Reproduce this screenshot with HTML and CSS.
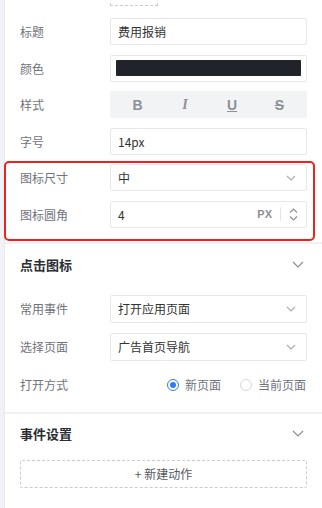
FILE: index.html
```html
<!DOCTYPE html>
<html lang="zh-CN">
<head>
    <meta charset="UTF-8">
    <meta name="viewport" content="width=device-width, initial-scale=1.0">
    <title>图标属性</title>
    <link rel="stylesheet" href="styles.css">
</head>
<body>
    <div class="side-strip"></div>
    <div class="panel">
        <div class="icon-slot"></div>

        <div class="form-row">
            <label class="row-label">标题</label>
            <div class="field"><span class="field-text">费用报销</span></div>
        </div>
        <div class="form-row">
            <label class="row-label">颜色</label>
            <div class="field color-field"><div class="color-swatch"></div></div>
        </div>
        <div class="form-row">
            <label class="row-label">样式</label>
            <div class="style-bar">
                <span class="style-btn bold">B</span>
                <span class="style-btn italic">I</span>
                <span class="style-btn underline">U</span>
                <span class="style-btn strike">S</span>
            </div>
        </div>
        <div class="form-row">
            <label class="row-label">字号</label>
            <div class="field"><span class="field-text">14px</span></div>
        </div>

        <div class="highlight-group">
            <div class="form-row">
                <label class="row-label">图标尺寸</label>
                <div class="field select">
                    <span class="field-text">中</span>
                    <svg class="chevron" width="10" height="6" viewBox="0 0 10 6"><path d="M1 1 L5 5 L9 1" fill="none" stroke="#a8abb2" stroke-width="1.1"/></svg>
                </div>
            </div>
            <div class="form-row">
                <label class="row-label">图标圆角</label>
                <div class="field number">
                    <span class="field-text">4</span>
                    <span class="unit">PX</span>
                    <span class="stepper">
                        <svg width="9" height="5" viewBox="0 0 9 5"><path d="M1 4.5 L4.5 1 L8 4.5" fill="none" stroke="#8a8d94" stroke-width="1.1"/></svg>
                        <svg width="9" height="5" viewBox="0 0 9 5"><path d="M1 0.5 L4.5 4 L8 0.5" fill="none" stroke="#8a8d94" stroke-width="1.1"/></svg>
                    </span>
                </div>
            </div>
        </div>

        <div class="divider first"></div>

        <div class="section-head">
            <span class="section-title">点击图标</span>
            <svg width="12" height="7" viewBox="0 0 12 7"><path d="M1 1 L6 6 L11 1" fill="none" stroke="#8a8d94" stroke-width="1.2"/></svg>
        </div>
        <div class="form-row tall">
            <label class="row-label">常用事件</label>
            <div class="field select">
                <span class="field-text">打开应用页面</span>
                <svg class="chevron" width="10" height="6" viewBox="0 0 10 6"><path d="M1 1 L5 5 L9 1" fill="none" stroke="#a8abb2" stroke-width="1.1"/></svg>
            </div>
        </div>
        <div class="form-row tall">
            <label class="row-label">选择页面</label>
            <div class="field select">
                <span class="field-text">广告首页导航</span>
                <svg class="chevron" width="10" height="6" viewBox="0 0 10 6"><path d="M1 1 L5 5 L9 1" fill="none" stroke="#a8abb2" stroke-width="1.1"/></svg>
            </div>
        </div>
        <div class="form-row tall">
            <label class="row-label">打开方式</label>
            <div class="radio-group">
                <span class="radio checked"><span class="radio-dot"></span>新页面</span>
                <span class="radio"><span class="radio-dot"></span>当前页面</span>
            </div>
        </div>

        <div class="divider second"></div>

        <div class="section-head small">
            <span class="section-title">事件设置</span>
            <svg width="12" height="7" viewBox="0 0 12 7"><path d="M1 1 L6 6 L11 1" fill="none" stroke="#8a8d94" stroke-width="1.2"/></svg>
        </div>
        <div class="add-action">+ 新建动作</div>
    </div>
</body>
</html>
```

FILE: styles.css
```css
body {
    margin: 0;
    display: flex;
    height: 100vh;
    overflow: hidden;
    background-color: #ffffff;
    font-family: "Noto Sans CJK SC", "Noto Sans", sans-serif;
    font-size: 12px;
    color: #333333;
}

.side-strip {
    width: 4px;
    flex-shrink: 0;
    background-color: #f0f2f5;
    border-right: 1px solid #e8eaee;
}

.panel {
    flex: 1;
    padding: 0 15px;
    box-sizing: border-box;
}

.icon-slot {
    margin: -14px 0 12px 90px;
    width: 48px;
    height: 20px;
    border: 1px dashed #c9ccd2;
    box-sizing: border-box;
}

.form-row {
    display: flex;
    align-items: center;
    height: 27px;
    margin-bottom: 9.5px;
}
.form-row.tall {
    height: 28px;
    margin-bottom: 10px;
}

.row-label {
    width: 90px;
    flex-shrink: 0;
    color: #70737a;
}

.field {
    flex: 1;
    height: 100%;
    display: flex;
    align-items: center;
    padding: 0 7px;
    border: 1px solid #e6e8ec;
    border-radius: 2px;
    box-sizing: border-box;
}
.field-text {
    flex: 1;
    color: #333333;
}

.color-field {
    padding: 0 5px;
}
.color-swatch {
    width: 100%;
    height: 16px;
    background-color: #20232a;
    border-radius: 1px;
}

.style-bar {
    flex: 1;
    height: 100%;
    display: flex;
    align-items: center;
    justify-content: space-around;
    background-color: #f2f3f5;
    border-radius: 2px;
    padding: 0 4px;
}
.style-btn {
    font-family: "Liberation Sans", Arial, sans-serif;
    font-size: 14px;
    color: #8d9098;
    width: 20px;
    text-align: center;
}
.style-btn.bold {
    font-weight: bold;
}
.style-btn.italic {
    font-family: "Liberation Serif", serif;
    font-style: italic;
    font-weight: bold;
}
.style-btn.underline {
    text-decoration: underline;
    font-weight: bold;
}
.style-btn.strike {
    text-decoration: line-through;
    font-weight: bold;
}

.chevron {
    margin-right: 3px;
}

.unit {
    font-family: "Liberation Sans", Arial, sans-serif;
    font-weight: bold;
    color: #8d9098;
    font-size: 11px;
    padding-right: 8px;
    border-right: 1px solid #e3e5e9;
    line-height: 14px;
}
.stepper {
    display: flex;
    flex-direction: column;
    gap: 3px;
    padding-left: 8px;
    margin-right: 1px;
}
.stepper svg {
    display: block;
}

.highlight-group {
    position: relative;
    margin-top: 1px;
}
.highlight-group::after {
    content: "";
    position: absolute;
    top: -3px;
    bottom: -13px;
    left: -16px;
    right: -8px;
    border: 2.5px solid #f0201c;
    border-radius: 5px;
    pointer-events: none;
}

.divider {
    height: 2px;
    background-color: #f0f1f4;
    margin: 0 -15px;
}
.divider.first {
    margin-top: 14px;
}
.divider.second {
    margin-top: 13px;
}

.section-head {
    display: flex;
    align-items: center;
    justify-content: space-between;
    height: 42px;
    margin-bottom: 9px;
    padding-right: 3px;
}
.section-head.small {
    height: 40px;
    margin-bottom: 6px;
}
.section-title {
    font-size: 13px;
    font-weight: bold;
    color: #2b2e33;
}

.radio-group {
    display: flex;
    align-items: center;
    gap: 19px;
    padding-left: 57px;
    white-space: nowrap;
}
.radio {
    display: flex;
    align-items: center;
    gap: 6px;
    color: #70737a;
}
.radio-dot {
    width: 10px;
    height: 10px;
    border: 1px solid #d6d8dd;
    border-radius: 50%;
    box-sizing: content-box;
    position: relative;
}
.radio.checked .radio-dot {
    border-color: #2f7cf6;
}
.radio.checked .radio-dot::after {
    content: "";
    position: absolute;
    top: 2px;
    left: 2px;
    width: 6px;
    height: 6px;
    border-radius: 50%;
    background-color: #2f7cf6;
}

.add-action {
    height: 28px;
    display: flex;
    align-items: center;
    justify-content: center;
    border: 1px dashed #c9ccd2;
    border-radius: 2px;
    box-sizing: border-box;
    color: #555860;
}
```
